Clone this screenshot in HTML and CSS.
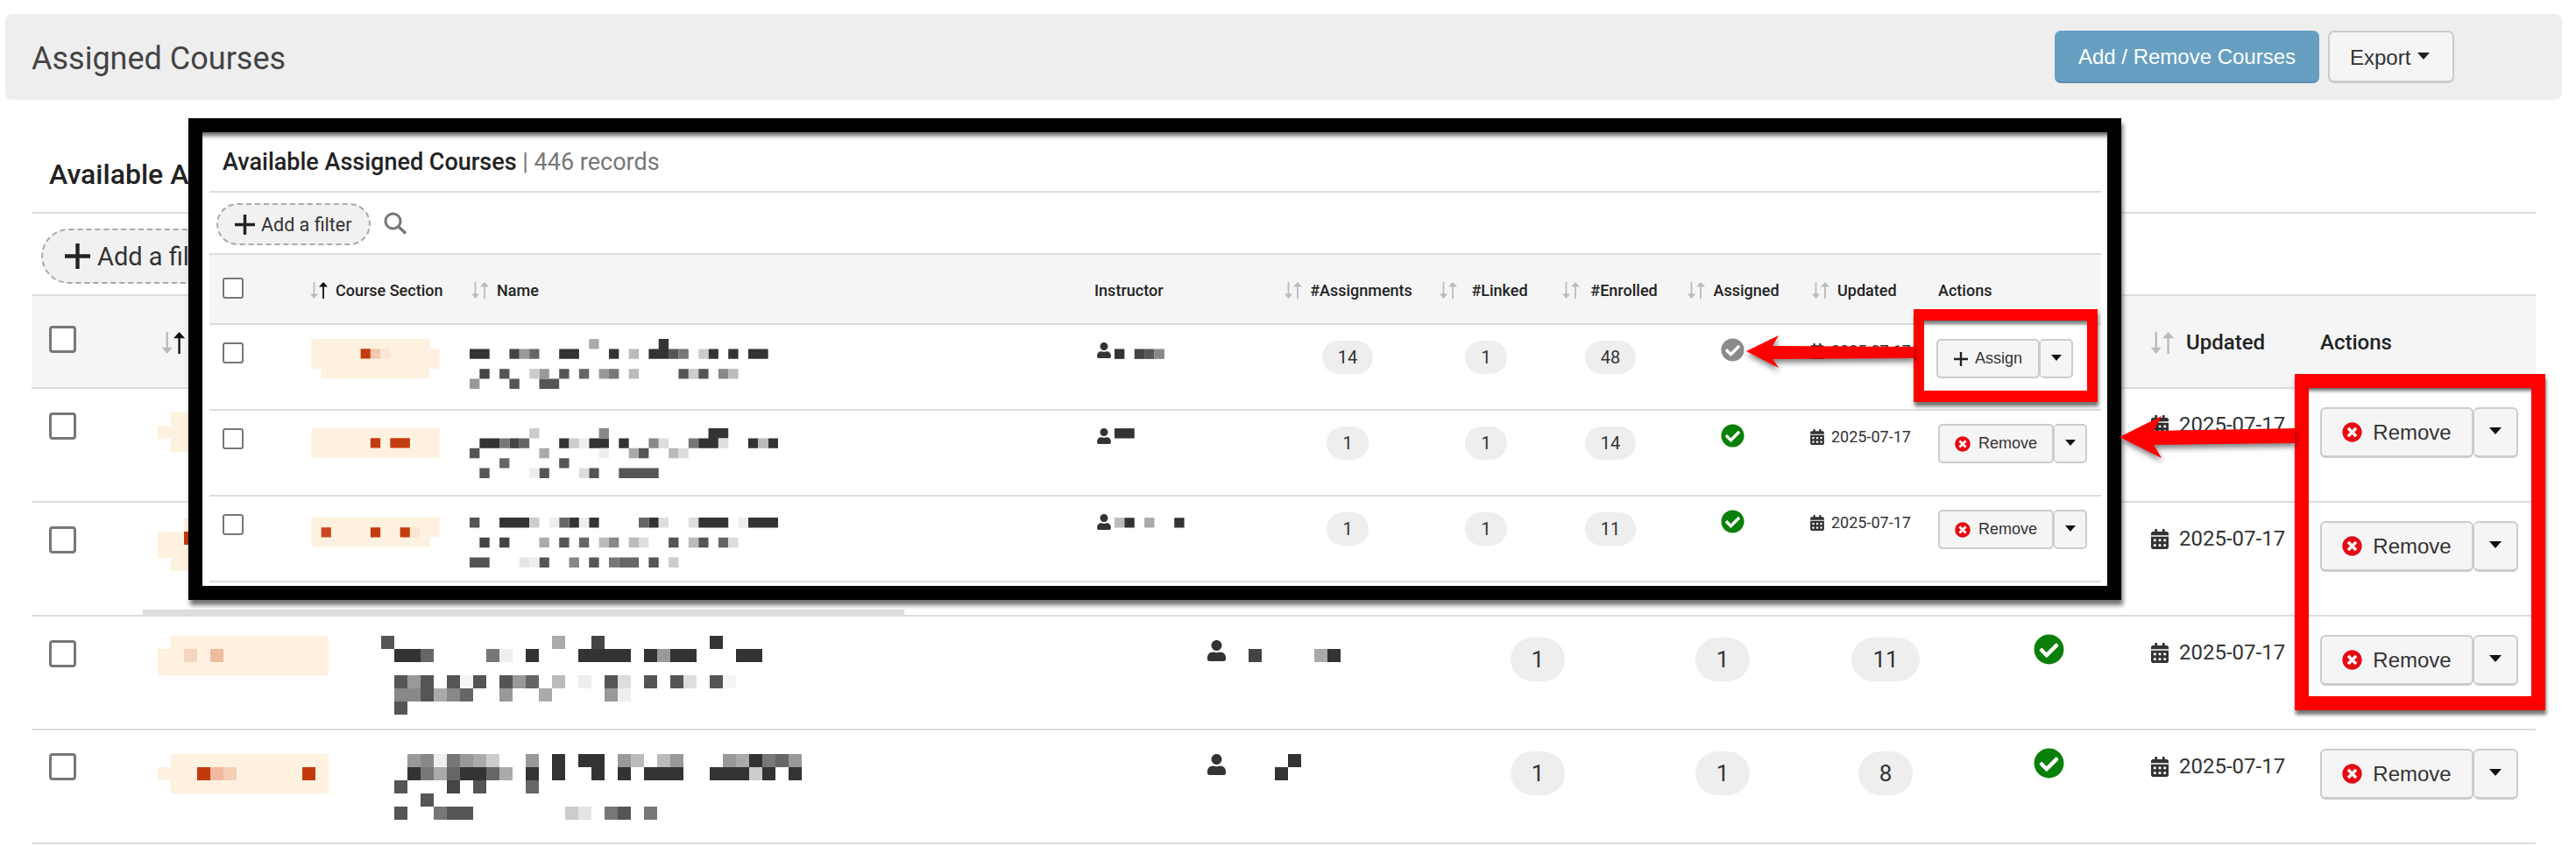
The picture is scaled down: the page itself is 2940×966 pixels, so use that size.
FILE: index.html
```html
<!DOCTYPE html>
<html lang="en">
<head>
<meta charset="utf-8">
<title>Assigned Courses</title>
<link rel="stylesheet" href="styles.css">
</head>
<body>
<svg class="sprite" aria-hidden="true">
  <symbol id="sort" viewBox="0 0 22 19"><path fill="#bbb" d="M4.6 0h1.8v13.5H10L5.5 19 1 13.500h3.600z"/><path fill="currentColor" d="M15.100 19h1.800V5.500H21L16 0l-5 5.500h4.100z"/></symbol>
  <symbol id="user" viewBox="0 0 448 512"><path d="M224 256c70.700 0 128-57.300 128-128S294.700 0 224 0 96 57.300 96 128s57.300 128 128 128zm89.600 32h-16.700c-22.200 10.200-46.900 16-72.900 16s-50.600-5.800-72.900-16h-16.700C60.200 288 0 348.200 0 422.400V464c0 26.500 21.500 48 48 48h352c26.500 0 48-21.500 48-48v-41.600c0-74.200-60.200-134.400-134.400-134.400z"/></symbol>
  <symbol id="cal" viewBox="0 0 448 512"><path d="M0 464c0 26.500 21.500 48 48 48h352c26.500 0 48-21.500 48-48V192H0v272zm320-196c0-6.600 5.400-12 12-12h40c6.600 0 12 5.400 12 12v40c0 6.600-5.400 12-12 12h-40c-6.600 0-12-5.400-12-12v-40zm0 128c0-6.600 5.400-12 12-12h40c6.600 0 12 5.400 12 12v40c0 6.600-5.400 12-12 12h-40c-6.600 0-12-5.400-12-12v-40zM192 268c0-6.600 5.400-12 12-12h40c6.600 0 12 5.400 12 12v40c0 6.600-5.400 12-12 12h-40c-6.600 0-12-5.400-12-12v-40zm0 128c0-6.600 5.400-12 12-12h40c6.600 0 12 5.400 12 12v40c0 6.600-5.400 12-12 12h-40c-6.600 0-12-5.400-12-12v-40zM64 268c0-6.600 5.400-12 12-12h40c6.600 0 12 5.400 12 12v40c0 6.600-5.400 12-12 12H76c-6.600 0-12-5.400-12-12v-40zm0 128c0-6.600 5.400-12 12-12h40c6.600 0 12 5.400 12 12v40c0 6.600-5.400 12-12 12H76c-6.600 0-12-5.400-12-12v-40zM400 64h-48V16c0-8.800-7.200-16-16-16h-32c-8.800 0-16 7.200-16 16v48H160V16c0-8.800-7.200-16-16-16h-32c-8.800 0-16 7.200-16 16v48H48C21.500 64 0 85.500 0 112v48h448v-48c0-26.500-21.500-48-48-48z"/></symbol>
  <symbol id="ok" viewBox="0 0 512 512"><path d="M504 256c0 136.967-111.033 248-248 248S8 392.967 8 256 119.033 8 256 8s248 111.033 248 248zM227.314 387.314l184-184c6.248-6.248 6.248-16.379 0-22.627l-22.627-22.627c-6.248-6.249-16.379-6.249-22.628 0L216 308.118l-70.059-70.059c-6.248-6.248-16.379-6.248-22.628 0l-22.627 22.627c-6.248 6.248-6.248 16.379 0 22.627l104 104c6.249 6.249 16.379 6.249 22.628.001z"/></symbol>
  <symbol id="x" viewBox="0 0 512 512"><path d="M256 8C119 8 8 119 8 256s111 248 248 248 248-111 248-248S393 8 256 8zm121.600 313.100c4.700 4.700 4.700 12.300 0 17L338 377.600c-4.700 4.700-12.300 4.700-17 0L256 312l-65.100 65.600c-4.700 4.700-12.300 4.700-17 0L134.400 338c-4.700-4.700-4.700-12.300 0-17l65.600-65-65.600-65.100c-4.700-4.700-4.700-12.300 0-17l39.600-39.600c4.700-4.700 12.300-4.700 17 0l65 65.700 65.100-65.600c4.700-4.700 12.300-4.700 17 0l39.600 39.600c4.700 4.700 4.700 12.300 0 17L312 256l65.600 65.100z"/></symbol>
  <symbol id="plus" viewBox="0 0 20 20"><path d="M8.500 0h3v8.500H20v3h-8.500V20h-3v-8.500H0v-3h8.500z"/></symbol>
  <symbol id="caret" viewBox="0 0 14 8"><path d="M0 0h14L7 8z"/></symbol>
  <symbol id="search" viewBox="0 0 27 26"><circle cx="10.500" cy="10.500" r="8.500" fill="none" stroke="currentColor" stroke-width="3"/><path d="M16.500 16.500l8.500 8" fill="none" stroke="currentColor" stroke-width="3.500"/></symbol>
</svg>

<header class="bar">
  <h1 class="bar-title">Assigned Courses</h1>
  <div class="bar-actions">
    <button class="btn btn-primary">Add / Remove Courses</button>
    <button class="btn btn-export">Export<svg class="caret-lg"><use href="#caret"/></svg></button>
  </div>
</header>

<main class="panel">
  <h2 class="panel-title">Available Assigned Courses</h2>
  <div class="filter-row">
    <span class="pill-filter"><svg class="plus-lg"><use href="#plus"/></svg>Add a filter</span>
  </div>
  <table class="grid">
    <colgroup><col class="c1"><col class="c2"><col class="c3"><col class="c4"><col class="c5"><col class="c6"><col class="c7"><col class="c8"><col class="c9"><col class="c10"></colgroup>
    <thead>
      <tr>
        <th><span class="cb"></span></th>
        <th><span class="th-in"><svg class="sort on"><use href="#sort"/></svg>Course Section</span></th>
        <th><span class="th-in"><svg class="sort"><use href="#sort"/></svg>Name</span></th>
        <th>Instructor</th>
        <th><span class="th-in"><svg class="sort"><use href="#sort"/></svg>#Assignments</span></th>
        <th><span class="th-in"><svg class="sort"><use href="#sort"/></svg>#Linked</span></th>
        <th><span class="th-in"><svg class="sort"><use href="#sort"/></svg>#Enrolled</span></th>
        <th><span class="th-in"><svg class="sort"><use href="#sort"/></svg>Assigned</span></th>
        <th><span class="th-in"><svg class="sort"><use href="#sort"/></svg>Updated</span></th>
        <th class="th-plain">Actions</th>
      </tr>
    </thead>
    <tbody>
      <tr>
        <td><span class="cb"></span></td>
        <td class="cell-mos"><svg class="org drop9" viewBox="0 0 13 5"><path class="o" d="M1 0h12v1H1zM0 1h13v1H0zM1 2h12v1H1z"/><path fill="#c23a0c" d="M3 1h1v1H3z"/></svg></td>
        <td></td><td></td>
        <td class="num"><span class="count">1</span></td>
        <td class="num"><span class="count">1</span></td>
        <td class="num"><span class="count">14</span></td>
        <td class="num cell-ok"><svg class="ok"><use href="#ok"/></svg></td>
        <td class="cell-date"><span class="date"><svg class="cal"><use href="#cal"/></svg>2025-07-17</span></td>
        <td class="cell-act"><span class="group"><button class="btn-g btn-rm"><svg class="x"><use href="#x"/></svg>Remove</button><button class="btn-g btn-car"><svg class="caret-md"><use href="#caret"/></svg></button></span></td>
      </tr>
      <tr>
        <td><span class="cb"></span></td>
        <td class="cell-mos"><svg class="org" viewBox="0 0 13 5"><path class="o" d="M2 0h11v1H2zM0 1h13v2H0zM1 3h12v1H1z"/><path fill="#c23a0c" d="M2 1h1v1H2z"/></svg></td>
        <td></td><td></td>
        <td class="num"><span class="count">1</span></td>
        <td class="num"><span class="count">1</span></td>
        <td class="num"><span class="count">9</span></td>
        <td class="num cell-ok"><svg class="ok"><use href="#ok"/></svg></td>
        <td class="cell-date"><span class="date"><svg class="cal"><use href="#cal"/></svg>2025-07-17</span></td>
        <td class="cell-act"><span class="group"><button class="btn-g btn-rm"><svg class="x"><use href="#x"/></svg>Remove</button><button class="btn-g btn-car"><svg class="caret-md"><use href="#caret"/></svg></button></span></td>
      </tr>
      <tr>
        <td><span class="cb"></span></td>
        <td class="cell-mos"><svg class="org drop4" viewBox="0 0 13 5"><path class="o" d="M1 0h12v1H1zM0 1h13v2H0z"/><path fill="#f5d5c0" d="M2 1h1v1H2z"/><path fill="#f0bba0" d="M4 1h1v1H4z"/></svg></td>
        <td class="cell-mos"><svg class="mos-lg drop4" viewBox="0 0 32 6">
          <path fill="#333" d="M25 0h1v1h-1zM1 1h2v1H1zM11 1h1v1h-1zM15 1h4v1h-4zM20 1h1v1h-1zM22 1h2v1h-2zM27 1h2v1h-2z"/>
          <path fill="#444" d="M16 0h1v1h-1z"/>
          <path fill="#555" d="M0 0h1v1H0zM1 3h1v1H1zM3 3h1v1H3zM5 3h1v1H5zM7 3h1v1H7zM9 3h1v1H9zM17 3h1v1h-1zM20 3h1v1h-1zM22 3h1v1h-1zM25 3h1v1h-1zM3 4h1v1H3zM1 5h1v1H1z"/>
          <path fill="#666" d="M3 1h1v1H3zM11 3h1v1h-1zM6 4h1v1H6z"/>
          <path fill="#777" d="M8 1h1v1H8z"/>
          <path fill="#888" d="M1 4h2v1H1zM5 4h1v1H5z"/>
          <path fill="#999" d="M21 1h1v1h-1zM2 3h1v1H2zM10 3h1v1h-1zM9 4h1v1H9zM17 4h1v1h-1z"/>
          <path fill="#aaa" d="M13 0h1v1h-1zM4 4h1v1H4zM12 4h1v1h-1z"/>
          <path fill="#bbb" d="M13 3h1v1h-1z"/>
          <path fill="#ddd" d="M18 3h1v1h-1zM23 3h1v1h-1z"/>
          <path fill="#eee" d="M9 1h1v1H9zM15 3h1v1h-1zM18 4h1v1h-1z"/>
          <path fill="#f5f5f5" d="M6 3h1v1H6zM26 3h1v1h-1z"/>
        </svg></td>
        <td class="cell-inst"><svg class="user"><use href="#user"/></svg><svg class="inst-lg inst-low" viewBox="0 0 10 2"><path fill="#444" d="M0 0h1v1H0z"/><path fill="#aaa" d="M5 0h1v1H5z"/><path fill="#333" d="M6 0h1v1H6z"/></svg></td>
        <td class="num"><span class="count">1</span></td>
        <td class="num"><span class="count">1</span></td>
        <td class="num"><span class="count">11</span></td>
        <td class="num cell-ok"><svg class="ok"><use href="#ok"/></svg></td>
        <td class="cell-date"><span class="date"><svg class="cal"><use href="#cal"/></svg>2025-07-17</span></td>
        <td class="cell-act"><span class="group"><button class="btn-g btn-rm"><svg class="x"><use href="#x"/></svg>Remove</button><button class="btn-g btn-car"><svg class="caret-md"><use href="#caret"/></svg></button></span></td>
      </tr>
      <tr>
        <td><span class="cb cb-up"></span></td>
        <td class="cell-mos"><svg class="org drop9" viewBox="0 0 13 5"><path class="o" d="M1 0h12v1H1zM0 1h13v1H0zM1 2h12v1H1z"/><path fill="#c23a0c" d="M3 1h1v1H3zM11 1h1v1h-1z"/><path fill="#f0bba0" d="M4 1h1v1H4z"/><path fill="#f5cfb5" d="M5 1h1v1H5z"/></svg></td>
        <td class="cell-mos"><svg class="mos-lg drop9" viewBox="0 0 32 6">
          <path fill="#333" d="M13 0h1v1h-1zM15 0h2v1h-2zM28 0h1v1h-1zM2 1h1v1H2zM6 1h2v1H6zM11 1h1v1h-1zM13 1h1v1h-1zM16 1h1v1h-1zM18 1h1v1h-1zM20 1h3v1h-3zM25 1h3v1h-3zM29 1h1v1h-1zM31 1h1v1h-1z"/>
          <path fill="#444" d="M5 2h1v1H5z"/>
          <path fill="#555" d="M1 2h1v1H1zM7 2h1v1H7zM3 3h1v1H3zM1 4h1v1H1zM5 4h2v1H5zM18 4h1v1h-1z"/>
          <path fill="#666" d="M30 0h1v1h-1zM5 1h1v1H5zM8 1h1v1H8zM11 2h1v1h-1z"/>
          <path fill="#777" d="M5 0h1v1H5zM29 0h1v1h-1zM3 1h1v1H3zM4 4h1v1H4zM17 4h1v1h-1zM20 4h1v1h-1z"/>
          <path fill="#888" d="M3 0h1v1H3z"/>
          <path fill="#999" d="M2 0h1v1H2zM6 0h1v1H6zM11 0h1v1h-1zM18 0h1v1h-1zM22 0h1v1h-1zM26 0h1v1h-1zM31 0h1v1h-1z"/>
          <path fill="#aaa" d="M7 0h1v1H7zM27 0h1v1h-1zM4 1h1v1H4zM9 1h1v1H9z"/>
          <path fill="#bbb" d="M19 0h1v1h-1zM21 0h1v1h-1z"/>
          <path fill="#ccc" d="M8 0h1v1H8zM28 1h1v1h-1zM14 4h1v1h-1z"/>
          <path fill="#e5e5e5" d="M15 4h1v1h-1z"/>
          <path fill="#eee" d="M4 0h1v1H4z"/>
        </svg></td>
        <td class="cell-inst"><svg class="user"><use href="#user"/></svg><svg class="inst-lg" viewBox="0 0 10 2"><path fill="#333" d="M3 0h1v1H3zM2 1h1v1H2z"/></svg></td>
        <td class="num"><span class="count">1</span></td>
        <td class="num"><span class="count">1</span></td>
        <td class="num"><span class="count">8</span></td>
        <td class="num cell-ok"><svg class="ok"><use href="#ok"/></svg></td>
        <td class="cell-date"><span class="date"><svg class="cal"><use href="#cal"/></svg>2025-07-17</span></td>
        <td class="cell-act"><span class="group"><button class="btn-g btn-rm"><svg class="x"><use href="#x"/></svg>Remove</button><button class="btn-g btn-car"><svg class="caret-md"><use href="#caret"/></svg></button></span></td>
      </tr>
    </tbody>
  </table>
</main>
<div class="scroll-thumb"></div>

<section class="shot">
  <div class="shot-title"><strong>Available Assigned Courses</strong> <span class="records">| 446 records</span></div>
  <div class="shot-filter">
    <span class="pill-filter pill-sm"><svg class="plus-sm"><use href="#plus"/></svg>Add a filter</span>
    <svg class="search"><use href="#search"/></svg>
  </div>
  <table class="mini">
    <colgroup><col class="m1"><col class="m2"><col class="m3"><col class="m4"><col class="m5"><col class="m6"><col class="m7"><col class="m8"><col class="m9"><col class="m10"></colgroup>
    <thead>
      <tr>
        <th><span class="cb"></span></th>
        <th><span class="th-in"><svg class="sort on"><use href="#sort"/></svg>Course Section</span></th>
        <th><span class="th-in"><svg class="sort"><use href="#sort"/></svg>Name</span></th>
        <th>Instructor</th>
        <th class="th-c"><span class="th-in"><svg class="sort"><use href="#sort"/></svg>#Assignments</span></th>
        <th class="th-c"><span class="th-in"><svg class="sort sort-far"><use href="#sort"/></svg>#Linked</span></th>
        <th class="th-c"><span class="th-in"><svg class="sort sort-mid"><use href="#sort"/></svg>#Enrolled</span></th>
        <th class="th-c"><span class="th-in"><svg class="sort"><use href="#sort"/></svg>Assigned</span></th>
        <th><span class="th-in"><svg class="sort"><use href="#sort"/></svg>Updated</span></th>
        <th>Actions</th>
      </tr>
    </thead>
    <tbody>
      <tr>
        <td class="cell-cb"><span class="cb"></span></td>
        <td><svg class="org" viewBox="0 0 13 4"><path class="o" d="M0 0h12v1H0zM0 1h13v2H0zM1 3h11v1H1z"/><path fill="#c13c0e" d="M5 1h1v1H5z"/><path fill="#f3c8ae" d="M6 1h1v1H6z"/><path fill="#fbe6d4" d="M7 1h1v1H7z"/></svg></td>
        <td><svg class="mos-sm" viewBox="0 0 31 5">
          <path fill="#333" d="M19 0h1v1h-1zM0 1h2v1H0zM9 1h2v1H9zM14 1h1v1h-1zM18 1h2v1h-2zM24 1h1v1h-1zM26 1h1v1h-1zM28 1h2v1h-2z"/>
          <path fill="#444" d="M4 1h1v1H4zM1 3h1v1H1z"/>
          <path fill="#555" d="M20 1h1v1h-1zM3 3h1v1H3zM9 3h1v1H9zM21 3h1v1h-1zM23 3h1v1h-1zM4 4h1v1H4zM7 4h2v1H7z"/>
          <path fill="#666" d="M6 1h1v1H6zM11 3h1v1h-1z"/>
          <path fill="#777" d="M21 1h1v1h-1zM14 3h1v1h-1z"/>
          <path fill="#888" d="M25 3h1v1h-1z"/>
          <path fill="#999" d="M5 1h1v1H5zM7 3h1v1H7zM13 3h1v1h-1zM0 4h1v1H0z"/>
          <path fill="#aaa" d="M12 0h1v1h-1z"/>
          <path fill="#bbb" d="M16 1h1v1h-1zM16 3h1v1h-1zM26 3h1v1h-1z"/>
          <path fill="#ccc" d="M23 1h1v1h-1zM6 3h1v1H6zM22 3h1v1h-1z"/>
        </svg></td>
        <td class="cell-inst"><svg class="user"><use href="#user"/></svg><svg class="inst-sm" viewBox="0 0 8 2"><path fill="#333" d="M0 1h1v1H0z"/><path fill="#444" d="M2 1h1v1H2z"/><path fill="#555" d="M3 1h1v1H3z"/><path fill="#888" d="M4 1h1v1H4z"/></svg></td>
        <td class="num"><span class="count">14</span></td>
        <td class="num"><span class="count">1</span></td>
        <td class="num"><span class="count">48</span></td>
        <td class="num cell-ok"><svg class="ok ok-off"><use href="#ok"/></svg></td>
        <td class="cell-date"><span class="date"><svg class="cal"><use href="#cal"/></svg>2025-07-17</span></td>
        <td class="cell-act"><span class="group group-assign"><button class="btn-g btn-as"><svg class="plus-xs"><use href="#plus"/></svg>Assign</button><button class="btn-g btn-car"><svg class="caret-md"><use href="#caret"/></svg></button></span></td>
      </tr>
      <tr>
        <td class="cell-cb"><span class="cb"></span></td>
        <td><svg class="org drop4" viewBox="0 0 13 4"><path class="o" d="M0 0h13v3H0z"/><path fill="#c13c0e" d="M6 1h1v1H6zM8 1h2v1H8z"/></svg></td>
        <td><svg class="mos-sm drop4" viewBox="0 0 31 5">
          <path fill="#333" d="M24 0h2v1h-2zM1 1h2v1H1zM9 1h1v1H9zM12 1h2v1h-2zM15 1h1v1h-1zM23 1h2v1h-2zM28 1h1v1h-1zM30 1h1v1h-1z"/>
          <path fill="#444" d="M4 1h1v1H4z"/>
          <path fill="#555" d="M0 2h1v1H0zM17 2h1v1h-1zM9 3h1v1H9zM1 4h1v1H1zM7 4h1v1H7zM12 4h1v1h-1zM15 4h4v1h-4z"/>
          <path fill="#666" d="M5 1h1v1H5zM3 3h1v1H3z"/>
          <path fill="#777" d="M3 1h1v1H3zM22 1h1v1h-1z"/>
          <path fill="#888" d="M13 0h1v1h-1zM18 1h1v1h-1z"/>
          <path fill="#aaa" d="M7 2h1v1H7zM16 2h1v1h-1z"/>
          <path fill="#bbb" d="M29 1h1v1h-1zM20 2h1v1h-1z"/>
          <path fill="#ccc" d="M6 0h1v1H6zM10 1h1v1h-1z"/>
          <path fill="#ddd" d="M19 1h1v1h-1zM25 1h1v1h-1zM21 2h1v1h-1zM11 4h1v1h-1z"/>
          <path fill="#eee" d="M11 1h1v1h-1zM13 2h1v1h-1zM6 4h1v1H6z"/>
        </svg></td>
        <td class="cell-inst"><svg class="user"><use href="#user"/></svg><svg class="inst-sm inst-r2" viewBox="0 0 8 2"><path fill="#333" d="M0 0h2v1H0z"/></svg></td>
        <td class="num"><span class="count">1</span></td>
        <td class="num"><span class="count">1</span></td>
        <td class="num"><span class="count">14</span></td>
        <td class="num cell-ok"><svg class="ok"><use href="#ok"/></svg></td>
        <td class="cell-date"><span class="date"><svg class="cal"><use href="#cal"/></svg>2025-07-17</span></td>
        <td class="cell-act"><span class="group"><button class="btn-g btn-rm"><svg class="x"><use href="#x"/></svg>Remove</button><button class="btn-g btn-car"><svg class="caret-md"><use href="#caret"/></svg></button></span></td>
      </tr>
      <tr>
        <td class="cell-cb"><span class="cb"></span></td>
        <td><svg class="org drop8" viewBox="0 0 13 4"><path class="o" d="M0 0h13v2H0zM0 2h12v1H0z"/><path fill="#c8471e" d="M1 1h1v1H1z"/><path fill="#c13c0e" d="M6 1h1v1H6zM9 1h1v1H9z"/><path fill="#fbe3d0" d="M10 1h1v1h-1z"/></svg></td>
        <td><svg class="mos-sm drop8" viewBox="0 0 31 5">
          <path fill="#333" d="M3 0h3v1H3zM10 0h1v1h-1zM12 0h1v1h-1zM18 0h1v1h-1zM23 0h3v1h-3zM28 0h3v1h-3z"/>
          <path fill="#444" d="M1 2h1v1H1zM3 2h1v1H3z"/>
          <path fill="#555" d="M0 0h1v1H0zM9 2h1v1H9zM20 2h1v1h-1zM23 2h1v1h-1zM0 4h2v1H0zM7 4h1v1H7zM12 4h1v1h-1zM18 4h1v1h-1z"/>
          <path fill="#666" d="M9 0h1v1H9zM17 0h1v1h-1zM11 2h1v1h-1zM25 2h1v1h-1zM15 4h2v1h-2z"/>
          <path fill="#777" d="M14 4h1v1h-1z"/>
          <path fill="#888" d="M14 2h1v1h-1zM10 4h1v1h-1z"/>
          <path fill="#aaa" d="M7 2h1v1H7z"/>
          <path fill="#bbb" d="M13 2h1v1h-1zM16 2h1v1h-1zM22 2h1v1h-1z"/>
          <path fill="#ccc" d="M6 0h1v1H6zM20 4h1v1h-1z"/>
          <path fill="#ddd" d="M19 0h1v1h-1zM22 0h1v1h-1zM17 2h1v1h-1zM26 2h1v1h-1z"/>
          <path fill="#e5e5e5" d="M5 4h1v1H5z"/>
          <path fill="#eee" d="M8 0h1v1H8zM11 0h1v1h-1zM27 0h1v1h-1zM6 4h1v1H6z"/>
        </svg></td>
        <td class="cell-inst"><svg class="user"><use href="#user"/></svg><svg class="inst-sm inst-r3" viewBox="0 0 8 2"><path fill="#bbb" d="M0 0h1v1H0z"/><path fill="#333" d="M1 0h1v1H1zM6 0h1v1H6z"/><path fill="#aaa" d="M3 0h1v1H3z"/></svg></td>
        <td class="num"><span class="count">1</span></td>
        <td class="num"><span class="count">1</span></td>
        <td class="num"><span class="count">11</span></td>
        <td class="num cell-ok"><svg class="ok"><use href="#ok"/></svg></td>
        <td class="cell-date"><span class="date"><svg class="cal"><use href="#cal"/></svg>2025-07-17</span></td>
        <td class="cell-act"><span class="group"><button class="btn-g btn-rm"><svg class="x"><use href="#x"/></svg>Remove</button><button class="btn-g btn-car"><svg class="caret-md"><use href="#caret"/></svg></button></span></td>
      </tr>
    </tbody>
  </table>
</section>

<div class="frame frame-big"></div>
<div class="frame frame-small"></div>
<svg class="arrow arrow-big" viewBox="0 0 214 60"><path d="M4 29 52 5l-9 17 161-3v17l-161 2 9 15z"/></svg>
<svg class="arrow arrow-small" viewBox="0 0 198 46"><path d="M2 21 39 3l-7 12 161 1v13l-161 1 7 10z"/></svg>
</body>
</html>
```
FILE: styles.css
```css
* { box-sizing: border-box; }
html, body { margin: 0; padding: 0; }
body {
  position: relative;
  width: 2940px;
  height: 966px;
  overflow: hidden;
  background: #fff;
  color: #333;
  font-family: "Liberation Sans", Arial, sans-serif;
}
.sprite { position: absolute; width: 0; height: 0; }
svg { display: block; flex: none; }

/* top bar */
.bar {
  display: flex;
  align-items: center;
  justify-content: space-between;
  height: 98px;
  margin: 16px 16px 0 6px;
  padding: 0 123px 0 30px;
  background: #eee;
  border-radius: 8px;
}
.bar-title {
  margin: 0;
  padding-top: 5px;
  font: 400 36px/1.2 Roboto, sans-serif;
  color: #444;
}
.bar-actions { display: flex; gap: 10px; }
.btn {
  height: 60px;
  border-radius: 7px;
  font: 400 24px "Liberation Sans", Arial, sans-serif;
}
.btn-primary {
  width: 302px;
  padding: 2px 0 0;
  color: #fff;
  background: #679fc1;
  border: 0;
  border-bottom: 2px solid #5b8fae;
}
.btn-export {
  display: flex;
  align-items: center;
  gap: 8px;
  width: 144px;
  padding: 2px 0 0 23px;
  color: #333;
  background: #f5f5f5;
  border: 2px solid #ccc;
  border-bottom-width: 3px;
}
.caret-lg { width: 14px; height: 8px; fill: #222; margin-top: -3px; }

/* main panel */
.panel { margin: 0 46px 0 36px; }
.panel-title {
  height: 130px;
  margin: 0;
  padding: 65px 0 0 20px;
  font: 500 32px/40px Roboto, sans-serif;
  color: #222;
  border-bottom: 2px solid #ddd;
}
.filter-row { height: 92px; padding: 17px 0 0 11px; }
.pill-filter {
  display: inline-flex;
  align-items: center;
  gap: 8px;
  height: 63px;
  padding: 0 25px;
  font: 400 29px Roboto, sans-serif;
  color: #333;
  background: #f1f1f1;
  border: 2px dashed #aaa;
  border-radius: 32px;
}
.plus-lg { width: 29px; height: 29px; fill: #222; }

table { border-collapse: separate; border-spacing: 0; table-layout: fixed; }
th, td { padding: 0; vertical-align: top; text-align: left; }
.th-in { display: inline-flex; align-items: center; }

.grid { width: 2858px; }
.c1 { width: 129px; } .c2 { width: 255px; } .c3 { width: 943px; } .c4 { width: 283px; }
.c5 { width: 218px; } .c6 { width: 204px; } .c7 { width: 168px; } .c8 { width: 204px; }
.c9 { width: 193px; } .c10 { width: 261px; }
.grid th {
  height: 108px;
  padding: 41px 0 0 20px;
  font: 500 24px/25px Roboto, sans-serif;
  color: #222;
  background: #f5f5f5;
  border-top: 2px solid #ddd;
  border-bottom: 2px solid #ddd;
}
.grid th:first-child { padding-top: 34px; }
.grid th.th-plain { padding-left: 15px; }
.grid .th-in { gap: 10px; }
.grid th:nth-child(9) { padding-left: 15px; }
.grid .sort { width: 30px; height: 25px; margin: 0 2px 0 -2px; }
.sort { color: #bbb; fill: #bbb; }
.sort.on { color: #111; }
.grid td {
  height: 130px;
  padding: 27px 0 0 20px;
  border-bottom: 2px solid #ddd;
}
.cb {
  display: block;
  width: 31px;
  height: 31px;
  background: #fff;
  border: 3px solid #777;
  border-radius: 4px;
}
.cb-up { margin-top: -1px; }
.grid .cell-mos { padding: 18px 0 0 15px; }
.org { display: block; width: 195px; height: 75px; }
.org .o { fill: #fff1df; }
.drop4 { margin-top: 4px; }
.drop8 { margin-top: 8px; }
.drop9 { margin-top: 9px; }
.mos-lg { width: 480px; height: 90px; }
.grid td.cell-inst { padding: 27px 0 0 15px; }
.cell-inst { white-space: nowrap; }
.user { width: 21px; height: 24px; fill: #333; display: inline-block; vertical-align: top; }
.inst-lg { width: 150px; height: 30px; display: inline-block; vertical-align: top; margin-left: 26px; }
.inst-low { margin-top: 10px; }
.grid td.num { padding: 24px 0 0; text-align: center; }
.count {
  display: inline-block;
  height: 50px;
  padding: 0 24px;
  font: 400 26px/50px Roboto, sans-serif;
  color: #333;
  background: #eee;
  border-radius: 25px;
}
.grid td.cell-ok { padding-top: 20px; }
.ok { width: 35px; height: 35px; fill: #0a800a; display: inline-block; }
.ok-off { fill: #8a8a8a; }
.grid td.cell-date { padding: 27px 0 0 15px; }
.date { display: flex; align-items: center; gap: 12px; font: 400 24px/28px Roboto, sans-serif; white-space: nowrap; color: #333; }
.cal { width: 20px; height: 23px; fill: #333; }
.grid td.cell-act { padding: 21px 0 0 15px; }
.group { display: inline-flex; }
.btn-g {
  display: flex;
  align-items: center;
  justify-content: center;
  height: 58px;
  padding: 0;
  font: 400 24px "Liberation Sans", Arial, sans-serif;
  color: #333;
  background: #f5f5f5;
  border: 2px solid #ccc;
  border-bottom-width: 3px;
  border-radius: 6px;
}
.btn-rm { width: 175px; gap: 12px; }
.btn-car { width: 51px; border-left-width: 1px; }
.x { width: 23px; height: 23px; fill: #e60a14; }
.caret-md { width: 14px; height: 8px; fill: #111; margin-top: -4px; }

.scroll-thumb {
  position: absolute;
  left: 163px;
  top: 696px;
  width: 869px;
  height: 7px;
  background: #ddd;
}

/* pasted screenshot */
.shot {
  position: absolute;
  left: 215px;
  top: 135px;
  width: 2206px;
  height: 550px;
  padding: 0 7px 0 8px;
  background: #fff;
  border: 16px solid #000;
  box-shadow: 2px 6px 5px rgba(0, 0, 0, .55), inset 0 7px 5px -3px rgba(0, 0, 0, .6);
}
.shot-title {
  height: 69px;
  padding: 19px 0 0 15px;
  font: 400 27px/30px Roboto, sans-serif;
  border-bottom: 2px solid #ddd;
}
.shot-title strong { font-weight: 500; color: #222; }
.records { color: #777; }
.shot-filter { display: flex; align-items: flex-start; gap: 15px; height: 69px; padding: 12px 0 0 8px; }
.pill-sm { height: 48px; gap: 7px; padding: 0 19px; font-size: 21.500px; border-radius: 24px; }
.plus-sm { width: 23px; height: 23px; fill: #222; }
.search { width: 27px; height: 26px; color: #777; margin-top: 10px; }

.mini { width: 2159px; }
.m1 { width: 101px; } .m2 { width: 181px; } .m3 { width: 713px; } .m4 { width: 222px; }
.m5 { width: 164px; } .m6 { width: 152px; } .m7 { width: 132px; } .m8 { width: 147px; }
.m9 { width: 146px; } .m10 { width: 201px; }
.mini th {
  height: 82px;
  padding: 31px 0 0 15px;
  font: 500 18px/19px Roboto, sans-serif;
  color: #222;
  background: #f5f5f5;
  border-top: 2px solid #ddd;
  border-bottom: 2px solid #ddd;
}
.mini th:first-child { padding-top: 26px; }
.mini th:nth-child(2) { padding-left: 12px; }
.mini th.th-c { padding-left: 0; text-align: center; }
.mini .th-in { gap: 7px; }
.mini .sort { width: 24px; height: 19px; margin: 0; }
.mini .sort-far { margin: 0 7px 0 -7px; }
.mini .sort-mid { margin: 0 3px 0 -3px; }
.mini .cb { width: 24px; height: 24px; border-width: 2px; border-radius: 3px; }
.mini td {
  height: 98px;
  padding: 16px 0 0 15px;
  border-bottom: 2px solid #ddd;
}
.mini td.cell-cb { padding-top: 20px; }
.mini .org { width: 147px; height: 45px; }
.mos-sm { width: 352px; height: 57px; }
.mini td.cell-inst { padding: 20px 0 0 18px; }
.mini .user { width: 16px; height: 18px; }
.inst-sm { width: 91px; height: 23px; display: inline-block; vertical-align: top; margin: -4px 0 0 4px; }
.inst-r2 { margin-top: 0; }
.inst-r3 { margin-top: 4px; }
.mini td.num { padding: 18px 0 0; text-align: center; }
.mini .count { height: 38px; padding: 0 18px; font-size: 20px; line-height: 38px; border-radius: 19px; }
.mini td.cell-ok { padding-top: 15px; }
.mini .ok { width: 27px; height: 27px; }
.mini td.cell-date { padding: 19px 0 0 15px; }
.mini .date { gap: 8px; font-size: 18px; line-height: 22px; }
.mini .cal { width: 16px; height: 18px; }
.mini td.cell-act { padding: 15px 0 0 15px; }
.mini .btn-g { height: 45px; font-size: 18px; border-width: 2px; border-left-width: 1px; border-radius: 5px; }
.mini .btn-rm { width: 132px; gap: 9px; border-left-width: 2px; }
.mini .btn-as { width: 118px; gap: 8px; border-left-width: 2px; }
.mini .btn-car { width: 38px; }
.mini .x { width: 18px; height: 18px; }
.mini .caret-md { width: 12px; height: 7px; margin-top: -2px; }
.group-assign { margin: 1px 0 0 -2px; }
.plus-xs { width: 16px; height: 16px; fill: #222; }

/* red annotations */
.frame {
  position: absolute;
  border-style: solid;
  border-color: #fe0000;
  box-shadow: 1px 5px 4px rgba(0, 0, 0, .55), inset 0 6px 4px -3px rgba(0, 0, 0, .6);
}
.frame-big { left: 2619px; top: 427px; width: 286px; height: 384px; border-width: 16px; }
.frame-small { left: 2184px; top: 353px; width: 210px; height: 106px; border-width: 13px 12px; }
.arrow { position: absolute; fill: #fe0000; filter: drop-shadow(1px 4px 3px rgba(0, 0, 0, .5)); }
.arrow-big { left: 2415px; top: 470px; width: 214px; height: 60px; }
.arrow-small { left: 1991px; top: 380px; width: 198px; height: 46px; }
```
